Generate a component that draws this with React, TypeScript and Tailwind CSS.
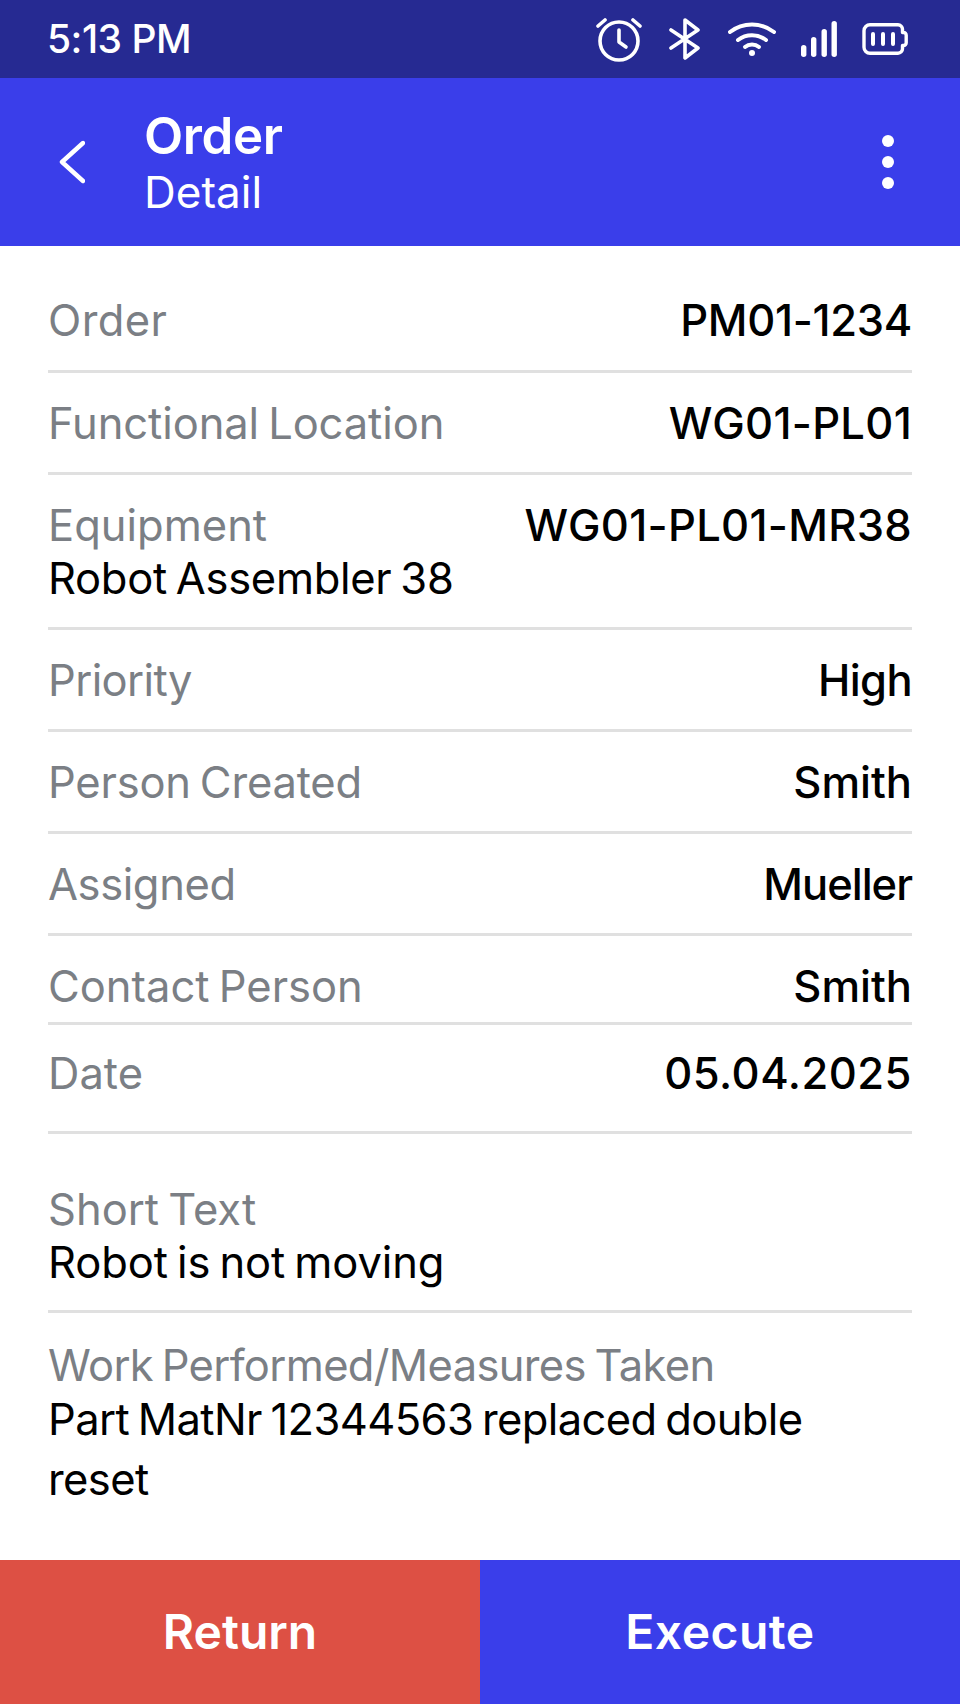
const INK = "text-black";
const MUTED = "text-[#7b7f85]";

type Row = {
  label: string;
  value: string;
  sub?: string;
  className: string;
  labelClassName?: string;
  valueClassName?: string;
};

const ROWS: Row[] = [
  { label: "Order", value: "PM01-1234", className: "h-[105px] pt-[26px]", labelClassName: "tracking-[0.4px]", valueClassName: "tracking-[-0.3px]" },
  { label: "Functional Location", value: "WG01-PL01", className: "h-[102px] pt-[24px]", labelClassName: "tracking-[-0.1px]", valueClassName: "tracking-[0.3px]" },
  { label: "Equipment", value: "WG01-PL01-MR38", sub: "Robot Assembler 38", className: "h-[155px] pt-[24px]", valueClassName: "tracking-[0.3px]" },
  { label: "Priority", value: "High", className: "h-[102px] pt-[24px]", labelClassName: "tracking-[-0.6px]", valueClassName: "tracking-[-0.6px]" },
  { label: "Person Created", value: "Smith", className: "h-[102px] pt-[24px]", labelClassName: "tracking-[-0.2px]" },
  { label: "Assigned", value: "Mueller", className: "h-[102px] pt-[24px]", labelClassName: "tracking-[-0.4px]", valueClassName: "tracking-[-1px]" },
  { label: "Contact Person", value: "Smith", className: "h-[89px] pt-[24px]" },
  { label: "Date", value: "05.04.2025", className: "h-[109px] pt-[22px]", valueClassName: "tracking-[0.5px]" },
];

function AlarmIcon() {
  return (
    <svg viewBox="0 0 46 46" className="h-[46px] w-[46px]" fill="none" stroke="white" strokeWidth="3.6" strokeLinecap="round" strokeLinejoin="round">
      <circle cx="23" cy="25" r="19" />
      <path d="M23 14v12l7 5" />
      <path d="M2 10l7-6M44 10l-7-6" />
    </svg>
  );
}

function BluetoothIcon() {
  return (
    <svg viewBox="0 0 32 42" className="h-[42px] w-[32px]" fill="none" stroke="white" strokeWidth="3.6" strokeLinecap="round" strokeLinejoin="round">
      <path d="M2 12l27 18-13 10V2l13 10L2 30" />
    </svg>
  );
}

function WifiIcon() {
  return (
    <svg viewBox="0 0 48 34" className="h-[34px] w-[48px]" fill="none" stroke="white" strokeWidth="4" strokeLinecap="round">
      <path d="M2 10c13-10 31-10 44 0" />
      <path d="M10 18c8-6.5 20-6.5 28 0" />
      <path d="M17 25c4-3.5 10-3.5 14 0" />
      <circle cx="24" cy="31" r="3" fill="white" stroke="none" />
    </svg>
  );
}

function SignalIcon() {
  return (
    <svg viewBox="0 0 36 36" className="h-[36px] w-[36px]" fill="white">
      <rect x="0" y="24" width="5.4" height="12" rx="2.7" />
      <rect x="10" y="16" width="5.4" height="20" rx="2.7" />
      <rect x="20.5" y="8" width="5.4" height="28" rx="2.7" />
      <rect x="30.5" y="0" width="5.4" height="36" rx="2.7" />
    </svg>
  );
}

function BatteryIcon() {
  return (
    <svg viewBox="0 0 46 32" className="h-[32px] w-[46px]" fill="none" stroke="white" strokeLinecap="round" strokeLinejoin="round">
      <path d="M8 1.8h28a4.5 4.5 0 0 1 4.5 4.5v3.2h1a2.7 2.7 0 0 1 2.7 2.7v7.6a2.7 2.7 0 0 1-2.7 2.7h-1v3.2a4.5 4.5 0 0 1-4.5 4.5H8a6 6 0 0 1-6-6V7.8a6 6 0 0 1 6-6z" strokeWidth="3.4" />
      <path d="M11 11v10M21 11v10M31 11v10" strokeWidth="4" />
    </svg>
  );
}

export default function App() {
  return (
    <div className="flex h-[1704px] w-[960px] flex-col overflow-hidden bg-white font-['Inter',sans-serif]">
      <div className="flex h-[78px] items-center justify-between bg-[#262a92] pl-[47px] pr-[52px] text-white">
        <span className="text-[39px] font-medium tracking-[-0.5px]">5:13 PM</span>
        <div className="flex items-center">
          <AlarmIcon />
          <div className="ml-[27px]"><BluetoothIcon /></div>
          <div className="ml-[27px]"><WifiIcon /></div>
          <div className="ml-[25px]"><SignalIcon /></div>
          <div className="ml-[25px]"><BatteryIcon /></div>
        </div>
      </div>

      <div className="flex h-[168px] items-center bg-[#3a3eea] text-white">
        <svg viewBox="0 0 26 44" className="ml-[59px] h-[44px] w-[26px]" fill="none" stroke="white" strokeWidth="4.4" strokeLinecap="round" strokeLinejoin="round">
          <path d="M24 3L3 22l21 19" />
        </svg>
        <div className="ml-[59px] flex flex-col pt-[3px]">
          <span className="text-[51px] font-semibold leading-[56px] tracking-[-0.4px]">Order</span>
          <span className="text-[44px] leading-[56px]">Detail</span>
        </div>
        <div className="ml-auto mr-[60px] flex w-[24px] flex-col items-center gap-[9px]">
          <span className="h-[12px] w-[12px] rounded-full bg-white" />
          <span className="h-[12px] w-[12px] rounded-full bg-white" />
          <span className="h-[12px] w-[12px] rounded-full bg-white" />
        </div>
      </div>

      <div className="flex-1 px-[48px] pt-[22px] text-[43.5px] leading-[52px] [word-spacing:-3px]">
        {ROWS.map((r) => (
          <div key={r.label} className={`flex justify-between border-b-[3px] border-[#e0e0e0] ${r.className}`}>
            <div>
              <div className={`${MUTED} ${r.labelClassName ?? ""}`}>{r.label}</div>
              {r.sub ? <div className={`mt-[1px] tracking-[-0.3px] ${INK}`}>{r.sub}</div> : null}
            </div>
            <div className={`font-medium ${INK} ${r.valueClassName ?? ""}`}>{r.value}</div>
          </div>
        ))}
        <div className="h-[179px] border-b-[3px] border-[#e0e0e0] pt-[49px]">
          <div className={MUTED}>Short Text</div>
          <div className={`mt-[1px] tracking-[-0.1px] ${INK}`}>Robot is not moving</div>
        </div>
        <div className="pt-[26px]">
          <div className={`tracking-[-0.65px] ${MUTED}`}>Work Performed/Measures Taken</div>
          <div className={`-mt-[2px] max-w-[780px] leading-[60px] tracking-[-0.6px] ${INK}`}>Part MatNr 12344563 replaced double reset</div>
        </div>
      </div>

      <div className="grid h-[144px] grid-cols-2 text-[48px] font-semibold text-white">
        <div className="flex items-center justify-center bg-[#dd5044]">Return</div>
        <div className="flex items-center justify-center bg-[#3a3eea] tracking-[0.5px]">Execute</div>
      </div>
    </div>
  );
}
